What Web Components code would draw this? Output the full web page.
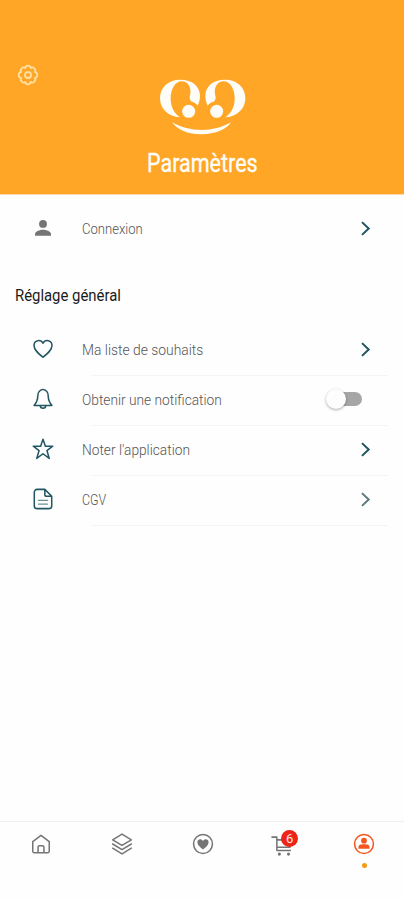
<!DOCTYPE html>
<html lang="fr">
<head>
<meta charset="utf-8">
<title>Paramètres</title>
<style>
html,body{margin:0;height:100%;background:#fefefe}
body{font-family:Roboto,"Liberation Sans",sans-serif;overflow:hidden}
</style>
</head>
<body>
<settings-page></settings-page>
<script>
const define = (name, css, html, after) => customElements.define(name, class extends HTMLElement {
  constructor() {
    super();
    this.attachShadow({mode: 'open'}).innerHTML = `<style>*{box-sizing:border-box}${css}</style>${typeof html === 'function' ? html(this) : html}`;
  }
  connectedCallback() { if (after) after(this); }
});

/* Text condensed horizontally to the width given in its w attribute */
define('narrow-text', `:host{display:block;width:var(--w);white-space:nowrap}
  span{display:inline-block;transform-origin:0 50%}`, '<span><slot></slot></span>', el => {
  const span = el.shadowRoot.querySelector('span');
  el.style.setProperty('--w', el.getAttribute('w') + 'px');
  span.style.transform = `scaleX(${el.getAttribute('w') / span.offsetWidth})`;
});

const icons = {
  gear: '<path stroke-width="2" d="M9 4.400C9.500 1 14.500 1 15 4.400C17.700 2.300 21.300 5.900 19.400 8.700C23 9.400 23 14.600 19.400 15.300C21.300 18.100 17.700 21.700 15 19.600C14.500 23 9.500 23 9 19.600C6.300 21.700 2.700 18.100 4.600 15.300C1 14.600 1 9.400 4.600 8.700C2.700 5.900 6.300 2.300 9 4.400z"/><circle cx="12" cy="12" r="3.300" stroke-width="2"/>',
  person: '<g fill="currentColor" stroke="none"><circle cx="12" cy="7.500" r="4.300"/><path d="M3.300 20.500v-2c0-2.900 5.500-4.600 8.700-4.600s8.700 1.700 8.700 4.600v2z"/></g>',
  heart: '<path d="M12 21C7 17 2.200 13.200 2.200 8.200C2.200 1.800 9.700 1.300 12 5.700C14.300 1.300 21.800 1.800 21.800 8.200C21.800 13.200 17 17 12 21z"/>',
  bell: '<path d="M12 1.500C8.200 2.200 6.300 5 6.300 8.700C6.300 13.500 5.300 15.500 2.300 19H21.700C18.700 15.500 17.700 13.500 17.700 8.700C17.700 5 15.800 2.200 12 1.500zM9 19.200c.2 3.800 5.800 3.800 6 0"/>',
  star: '<path d="M12 1.400l2.600 7.500h8l-6.300 4.800 2.500 8.600L12 17.200l-6.800 5.100 2.500-8.600L1.400 8.900h8z"/>',
  doc: '<path d="M14 1.500H5.500a3 3 0 0 0-3 3v15a3 3 0 0 0 3 3h13a3 3 0 0 0 3-3V9zM14 1.500V7a2 2 0 0 0 2 2h5.500"/><path stroke-width="1.300" opacity=".65" d="M7 13.500h10M7 17.500h10"/>',
  chevron: '<path stroke-width="2.900" stroke-linejoin="miter" stroke-linecap="butt" d="M7 3l9.500 9L7 21"/>',
  home: '<path d="M3 9.500 12 2.500l9 7V20a1.500 1.500 0 0 1-1.500 1.500h-15A1.500 1.500 0 0 1 3 20zM8.800 21v-5.500a1.500 1.500 0 0 1 1.500-1.500h3.400a1.500 1.500 0 0 1 1.500 1.500V21"/>',
  layers: '<path d="M12 1.200 22.200 7.400 12 13.600 1.800 7.400zM1.800 12 12 18.200 22.200 12M1.800 16.600 12 22.800 22.200 16.600"/>',
  favourite: '<circle cx="12" cy="12" r="10.300"/><path fill="currentColor" stroke="none" d="M12 18C8 15 5.900 12.600 5.900 10C5.900 6.300 10.300 5.900 12 8.600C13.700 5.900 18.100 6.300 18.100 10C18.100 12.600 16 15 12 18z"/>',
  cart: '<path d="M0 4.500h5.300V19H20M5.300 7.500H22l-2.500 8H5.300"/><g fill="currentColor" stroke="none"><circle cx="8" cy="23" r="1.700"/><circle cx="18" cy="23" r="1.700"/></g>',
  account: '<circle cx="12" cy="12" r="10.300"/><g fill="currentColor" stroke="none"><circle cx="12" cy="8.400" r="3.100"/><path d="M6 17.300v-1.400c0-3 2-3.600 6-3.600s6 .6 6 3.600v1.400z"/></g>'
};
define('line-icon', ':host{display:block;width:22px;height:22px;flex:none}svg{display:block;width:100%;height:100%;overflow:visible}',
  el => `<svg viewBox="0 0 24 24" fill="none" stroke="currentColor" stroke-width="1.650" stroke-linejoin="round" stroke-linecap="round">${icons[el.getAttribute('name')]}</svg>`);

const eye = `<path d="M120 156C84 154 60 130 60 99C60 65 86 43 121 43C157 43 180 63 180 92C180 103 177 112 173 121C169 115 163 110 155 109C151 106 149 101 149 95C157 70 146 48 125 48C105 48 92 72 92 99C92 125 103 146 120 156z"/>
    <circle cx="146" cy="138" r="26" fill="#ffa626"/><circle cx="146" cy="138" r="19.500"/>`;
define('smile-logo', ':host{display:block;width:86px;height:56px}svg{display:block}', `
  <svg width="86" height="56" viewBox="60 41 258 168" fill="#fffdf8">
    <g>${eye}</g><g transform="translate(376 0) scale(-1 1)">${eye}</g>
    <path d="M96 171C149 201 220 202 273 171C261 191 226 207 185 207C143 207 112 193 96 171z"/>
  </svg>`);

define('page-header', `:host{display:grid;grid-template-columns:1fr auto 1fr;height:195px;background:#ffa626;border-bottom:1px solid #ffdcae;color:#fffdf8}
  line-icon{margin:64px 0 0 17px;color:#ffe0a2}
  section{display:flex;flex-direction:column;align-items:center;padding-top:79px}
  smile-logo{margin-left:1px}
  narrow-text{font-size:25px;line-height:30px;margin-top:14px;font-weight:400;-webkit-text-stroke:.35px #fffdf8}`,
  '<line-icon name="gear"></line-icon><section><smile-logo></smile-logo><narrow-text w="111">Paramètres</narrow-text></section>');

define('toggle-switch', `:host{display:flex;align-items:center;width:36px;height:22px}
  i{display:block;flex:none;width:20px;height:20px;border-radius:50%;background:#fdfdfd;box-shadow:0 1px 3px #0005}
  b{display:block;flex:none;width:25px;height:14px;border-radius:0 7px 7px 0;background:#a6a6a6;margin-left:-9px;z-index:-1}`, '<i></i><b></b>');

define('setting-row', `:host{display:flex;height:50px;align-items:center;padding:0 15px 0 32px;position:relative;color:#215662}
  narrow-text{margin-left:28px;padding-top:2px;color:#555;font-size:15px;line-height:20px;font-weight:300}
  .end{margin-left:auto;margin-right:15px}
  :host([tone=grey]) .icon{color:#757575}
  .chev{width:17px;height:17px}
  :host([soft]) .chev{color:#5f7b80}
  toggle-switch.end{margin-right:27px}
  hr{position:absolute;left:91px;right:16px;bottom:-2px;margin:0;border:0;height:1px;background:#f4f4f4}`,
  el => `<line-icon class="icon" name="${el.getAttribute('icon')}"></line-icon><narrow-text w="${el.getAttribute('w')}"><slot></slot></narrow-text>
   ${el.hasAttribute('toggle') ? '<toggle-switch class="end"></toggle-switch>' : '<line-icon class="chev end" name="chevron"></line-icon>'}${el.hasAttribute('line') ? '<hr>' : ''}`);

define('tab-item', `:host{display:flex;flex-direction:column;align-items:center;width:22px;position:relative;color:#757575}
  :host([active]) line-icon{color:#f3561f}
  .badge{position:absolute;left:9px;top:-3px;width:17px;height:17px;border-radius:50%;background:#ef2418;color:#ffe9e4;font-size:13px;line-height:17px;text-align:center}
  .dot{width:5px;height:5px;border-radius:50%;background:#f59a16;margin-top:8px}`,
  el => `<line-icon name="${el.getAttribute('icon')}"></line-icon>${el.hasAttribute('count') ? `<span class="badge">${el.getAttribute('count')}</span>` : ''}${el.hasAttribute('active') ? '<span class="dot"></span>' : ''}`);

define('tab-bar', ':host{display:flex;justify-content:space-between;height:79px;margin-top:auto;border-top:1px solid #efefef;padding:11px 29px 0 30px}', '<slot></slot>');

define('settings-page', `:host{display:flex;flex-direction:column;width:404px;height:900px;isolation:isolate}
  h2{margin:32px 0 17px 15px;font-size:16px;line-height:22px;font-weight:400;color:#1a1a1a}
  .login{height:50px;margin-top:8px}`, `
  <page-header></page-header>
  <setting-row class="login" icon="person" tone="grey" w="61">Connexion</setting-row>
  <h2><narrow-text w="106">Réglage général</narrow-text></h2>
  <setting-row icon="heart" w="121" line>Ma liste de souhaits</setting-row>
  <setting-row icon="bell" w="140" toggle line>Obtenir une notification</setting-row>
  <setting-row icon="star" w="108" line>Noter l'application</setting-row>
  <setting-row icon="doc" w="24" line soft>CGV</setting-row>
  <tab-bar><tab-item icon="home"></tab-item><tab-item icon="layers"></tab-item><tab-item icon="favourite"></tab-item><tab-item icon="cart" count="6"></tab-item><tab-item icon="account" active></tab-item></tab-bar>`);
</script>
</body>
</html>
